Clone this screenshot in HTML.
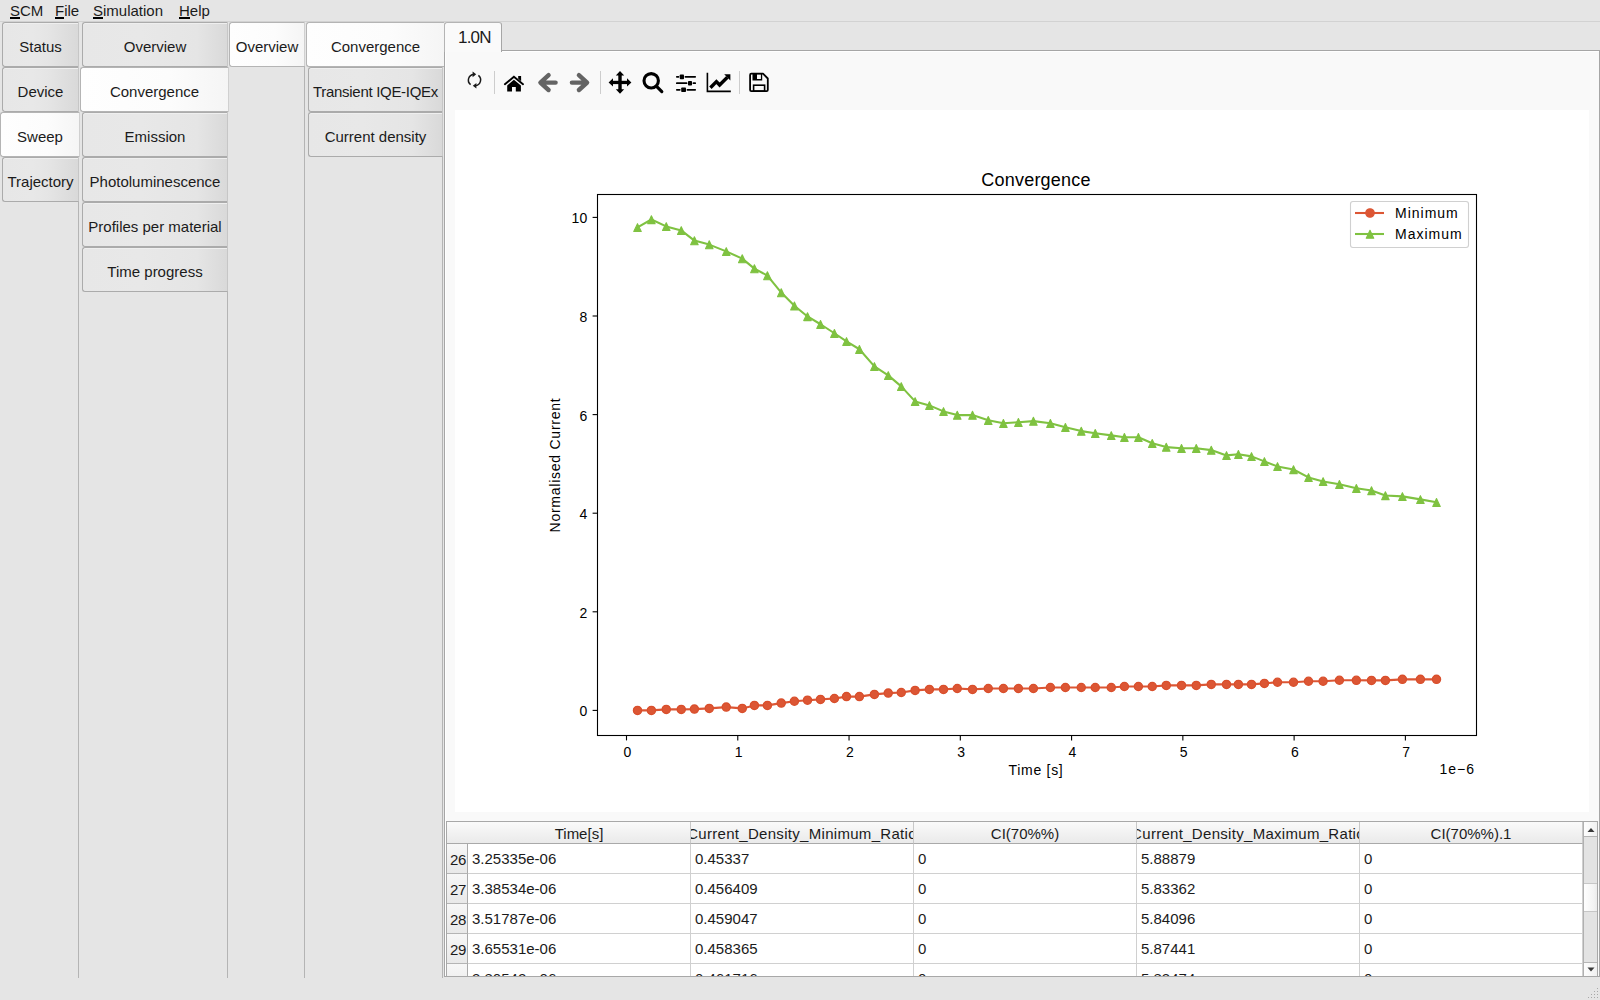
<!DOCTYPE html>
<html><head><meta charset="utf-8">
<style>
*{box-sizing:border-box;margin:0;padding:0}
html,body{width:1600px;height:1000px;overflow:hidden;background:#e5e5e5;font-family:"Liberation Sans",sans-serif;font-size:15px;color:#1b1b1b}
.a{position:absolute}
.menu{left:0;top:0;width:1600px;height:22px;background:#e5e5e5;border-bottom:1px solid #d2d2d2}
.menu span{position:absolute;top:3px;line-height:16px}
.menu u{text-decoration:none;position:relative}
.menu u::after{content:"";position:absolute;left:0;right:0;top:15.3px;height:1.7px;background:#000}
.tab{position:absolute;border:1px solid #ababab;border-right-color:#c6c6c6;border-radius:3px 0 0 3px;background:linear-gradient(to right,#e7e7e7 0%,#e8e8e8 40%,#e5e5e5 calc(100% - 30px),#d9d9d9 100%);box-shadow:inset 0 1px 0 #efefef;text-align:center;line-height:48px;white-space:nowrap;overflow:hidden}
.tab.sel{background:linear-gradient(to right,#fefefe 0%,#fcfcfc 60%,#f5f5f5 100%);border-color:#b4b4b4;border-right-color:#d0d0d0;box-shadow:none}
.vl{position:absolute;width:1px;background:#b4b4b4}
.pane{left:444px;top:50px;width:1156px;height:927px;background:#f9f9f9;border:1px solid #a6a6a6;box-shadow:inset 1px 1px 0 #fff}
.fig{left:455px;top:110px;width:1134px;height:702px;background:#fff}
.chart{position:absolute;left:0;top:0}
.tbl{left:446px;top:821px;width:1152px;height:156px;border:1px solid #a8a8a8;background:#fff;overflow:hidden}
.ht{position:absolute;left:50%;top:1px;transform:translateX(-50%)}
.hdr{position:absolute;top:0;height:22px;background:linear-gradient(#fafafa,#eaeaea);border-bottom:1px solid #a9a9a9;border-right:1px solid #c8c8c8;text-align:center;line-height:21px;white-space:nowrap;overflow:hidden;font-size:15px}
.cell{position:absolute;height:30px;border-bottom:1px solid #d0d0d0;border-right:1px solid #d0d0d0;padding-left:4px;line-height:30px;white-space:nowrap;overflow:hidden}
.rh{position:absolute;left:0;width:21px;height:30px;background:linear-gradient(#f7f7f7,#e8e8e8);border-bottom:1px solid #b4b4b4;border-right:1px solid #a9a9a9;line-height:32px;padding-left:3px;overflow:hidden;letter-spacing:-0.3px}
</style></head><body>
<div class="a menu">
<span style="left:10px"><u>S</u>CM</span>
<span style="left:55px"><u>F</u>ile</span>
<span style="left:93px"><u>S</u>imulation</span>
<span style="left:179px"><u>H</u>elp</span>
</div>

<!-- column 1 -->
<div class="tab" style="left:2px;top:22px;width:77px;height:45px">Status</div>
<div class="tab" style="left:2px;top:67px;width:77px;height:45px">Device</div>
<div class="tab sel" style="left:0px;top:112px;width:80px;height:45px">Sweep</div>
<div class="tab" style="left:2px;top:157px;width:77px;height:45px">Trajectory</div>
<div class="vl" style="left:78px;top:201px;height:777px"></div>

<!-- column 2 -->
<div class="tab" style="left:82px;top:22px;width:146px;height:45px">Overview</div>
<div class="tab sel" style="left:80px;top:67px;width:149px;height:45px">Convergence</div>
<div class="tab" style="left:82px;top:112px;width:146px;height:45px">Emission</div>
<div class="tab" style="left:82px;top:157px;width:146px;height:45px">Photoluminescence</div>
<div class="tab" style="left:82px;top:202px;width:146px;height:45px">Profiles per material</div>
<div class="tab" style="left:82px;top:247px;width:146px;height:45px">Time progress</div>
<div class="vl" style="left:227px;top:291px;height:687px"></div>

<!-- column 3 -->
<div class="tab sel" style="left:229px;top:22px;width:76px;height:45px">Overview</div>
<div class="vl" style="left:304px;top:66px;height:912px"></div>

<!-- column 4 -->
<div class="tab sel" style="left:306px;top:22px;width:138px;height:45px;border-radius:3px 0 0 3px;border-right:none">Convergence</div>
<div class="tab" style="left:308px;top:67px;width:135px;height:45px;letter-spacing:-0.3px">Transient IQE-IQEx</div>
<div class="tab" style="left:308px;top:112px;width:135px;height:45px">Current density</div>
<div class="vl" style="left:442px;top:156px;height:822px"></div>

<!-- main tab bar -->
<div class="a" style="left:445px;top:22px;width:1155px;height:29px;background:#e5e5e5;border-bottom:1px solid #a6a6a6"></div>
<div class="a pane"></div>
<div class="tab sel a" style="left:444px;top:22px;width:58px;height:30px;line-height:29px;border-bottom:none;border-radius:3px 3px 0 0;background:#fafafa;border-right-color:#a6a6a6;text-align:left;padding-left:13px;font-size:17px;line-height:30px;letter-spacing:-0.8px">1.0N</div>

<!-- toolbar -->
<div class="a" style="left:455px;top:60px;width:400px;height:45px">
<svg class="chart" width="1600" height="1000" viewBox="0 0 1600 1000" style="position:absolute;left:-455px;top:-60px">
<g fill="none" stroke="#1a1a1a" stroke-width="1.5">
<path d="M470.6 84.6A5.7 5.7 0 0 1 473.8 74.4"/>
<path d="M478.4 75.4A5.7 5.7 0 0 1 475.2 85.6"/>
</g>
<path d="M476.2 74.3L472.6 71.6L472.6 77.2Z M472.8 85.7L476.4 83L476.4 88.4Z" fill="#1a1a1a"/>
<g stroke="#cdcdcd" stroke-width="1"><line x1="494.5" y1="71" x2="494.5" y2="94"/><line x1="600.5" y1="71" x2="600.5" y2="94"/><line x1="739.5" y1="71" x2="739.5" y2="94"/></g>
<path d="M504.9 84.2L513.9 76.8L523 84.2" fill="none" stroke="#000" stroke-width="1.9" stroke-linecap="round"/>
<path d="M518.2 75.9H521.1V81.2L518.2 78.8Z" fill="#000"/>
<path d="M507.2 85.4L513.9 79.7L520.9 85.4V91.6H515.8V86.9H512V91.6H507.2Z" fill="#000"/>
<g fill="none" stroke="#646464" stroke-width="4.4" stroke-linecap="round" stroke-linejoin="round">
<path d="M548.6 75.2L540.4 82.6L548.6 90M541 82.6H555.6"/>
<path d="M578.9 75.2L587.1 82.6L578.9 90M586.5 82.6H571.9"/>
</g>
<path d="M618.3 75.6V89.2M621.7 75.6V89.2" stroke="none"/>
<rect x="618.3" y="75" width="3.4" height="15" fill="#000"/>
<rect x="612" y="80.8" width="16" height="3.3" fill="#000"/>
<path d="M620 71L624.2 75.6H615.8Z M620 93.8L624.2 89.2H615.8Z M608.6 82.4L613 78.2V86.6Z M631.4 82.4L627 78.2V86.6Z" fill="#000"/>
<circle cx="651.2" cy="80.8" r="7.2" fill="none" stroke="#000" stroke-width="3.1"/>
<path d="M656.6 86.4L661.8 91.6" stroke="#000" stroke-width="3.2" stroke-linecap="round"/>
<g stroke="#000" stroke-width="1.7" stroke-linecap="round"><path d="M676.8 76.8H678.6M685.4 76.8H695.2M676.8 83.2H686.6M693.4 83.2H695.2M676.8 89.8H679.8M687.4 89.8H695.2"/></g>
<g fill="#000"><rect x="679.8" y="74.4" width="4.2" height="4.8" rx="0.8"/><rect x="688" y="81" width="4" height="4.6" rx="0.8"/><rect x="681.2" y="87.4" width="4.8" height="4.6" rx="0.8"/></g>
<path d="M707.4 72.8V91.4H730.8" fill="none" stroke="#000" stroke-width="1.6"/>
<path d="M710.4 87.8L716.4 81.6L719.6 85L727.4 77.2" fill="none" stroke="#000" stroke-width="3.4"/>
<path d="M724.2 74.2H730.4V80.4Z" fill="#000"/>
<path d="M750.1 74.9Q750.1 73.7 751.3 73.7H763L767.8 78.5V90Q767.8 91.2 766.6 91.2H751.3Q750.1 91.2 750.1 90Z" fill="none" stroke="#000" stroke-width="1.8" stroke-linejoin="round"/>
<path d="M752.5 73.3H762.2V80.6H752.5Z M757 74.3V79.1H760.9V74.3Z" fill="#000" fill-rule="evenodd"/>
<rect x="753.6" y="85.2" width="11" height="6" fill="none" stroke="#000" stroke-width="1.6"/>
</svg>
</div>

<div class="a fig"></div>
<svg class="chart" width="1600" height="1000" viewBox="0 0 1600 1000">
<rect x="597.5" y="194.5" width="879" height="541" fill="none" stroke="#000" stroke-width="1.1"/>
<g stroke="#000" stroke-width="1.1"><line x1="626.50" y1="735.5" x2="626.50" y2="740.4"/><line x1="737.77" y1="735.5" x2="737.77" y2="740.4"/><line x1="849.04" y1="735.5" x2="849.04" y2="740.4"/><line x1="960.31" y1="735.5" x2="960.31" y2="740.4"/><line x1="1071.58" y1="735.5" x2="1071.58" y2="740.4"/><line x1="1182.85" y1="735.5" x2="1182.85" y2="740.4"/><line x1="1294.12" y1="735.5" x2="1294.12" y2="740.4"/><line x1="1405.39" y1="735.5" x2="1405.39" y2="740.4"/><line x1="597.5" y1="710.40" x2="592.6" y2="710.40"/><line x1="597.5" y1="611.80" x2="592.6" y2="611.80"/><line x1="597.5" y1="513.20" x2="592.6" y2="513.20"/><line x1="597.5" y1="414.60" x2="592.6" y2="414.60"/><line x1="597.5" y1="316.00" x2="592.6" y2="316.00"/><line x1="597.5" y1="217.40" x2="592.6" y2="217.40"/></g>
<g font-family="Liberation Sans, sans-serif" font-size="14" fill="#000"><text x="627.30" y="756.5" text-anchor="middle">0</text><text x="738.57" y="756.5" text-anchor="middle">1</text><text x="849.84" y="756.5" text-anchor="middle">2</text><text x="961.11" y="756.5" text-anchor="middle">3</text><text x="1072.38" y="756.5" text-anchor="middle">4</text><text x="1183.65" y="756.5" text-anchor="middle">5</text><text x="1294.92" y="756.5" text-anchor="middle">6</text><text x="1406.19" y="756.5" text-anchor="middle">7</text><text x="587.2" y="716.40" text-anchor="end">0</text><text x="587.2" y="617.80" text-anchor="end">2</text><text x="587.2" y="519.20" text-anchor="end">4</text><text x="587.2" y="420.60" text-anchor="end">6</text><text x="587.2" y="322.00" text-anchor="end">8</text><text x="587.2" y="223.40" text-anchor="end">10</text>
<text x="1475" y="774" text-anchor="end" letter-spacing="1">1e&#8722;6</text>
<text x="1036" y="775" text-anchor="middle" letter-spacing="0.7">Time [s]</text>
<text transform="translate(560 465) rotate(-90)" text-anchor="middle" letter-spacing="0.75">Normalised Current</text>
<text x="1036" y="186" text-anchor="middle" font-size="18" letter-spacing="0.2">Convergence</text>
</g>
<path d="M637.50 710.40 L651.40 710.40 L666.25 709.40 L681.25 709.40 L694.40 709.10 L709.25 708.40 L726.25 707.10 L742.25 708.40 L754.40 705.40 L767.40 705.40 L781.25 703.10 L794.40 701.25 L807.50 700.20 L820.50 699.40 L834.40 698.50 L846.50 696.60 L859.40 696.60 L874.40 694.40 L888.25 693.10 L901.25 692.50 L915.10 690.40 L929.40 689.40 L943.50 689.40 L957.25 688.50 L972.50 689.40 L988.25 688.50 L1003.40 688.50 L1018.40 688.50 L1033.40 688.50 L1050.40 687.50 L1065.40 687.50 L1081.25 687.50 L1095.25 687.50 L1111.25 687.50 L1124.40 686.50 L1138.40 686.50 L1152.25 686.50 L1166.25 685.40 L1181.50 685.40 L1196.25 685.40 L1211.25 684.40 L1226.50 684.40 L1238.40 684.40 L1251.50 684.40 L1264.40 683.40 L1277.50 682.25 L1293.50 682.25 L1308.50 681.25 L1323.10 681.25 L1339.40 680.25 L1356.35 680.30 L1371.50 680.40 L1385.40 680.40 L1402.40 679.35 L1420.40 679.35 L1436.50 679.35" fill="none" stroke="#dc5634" stroke-width="2.08" stroke-linejoin="round"/>
<g fill="#dc5634" stroke="#d94f2c" stroke-width="1.3"><circle cx="637.50" cy="710.40" r="4.1"/><circle cx="651.40" cy="710.40" r="4.1"/><circle cx="666.25" cy="709.40" r="4.1"/><circle cx="681.25" cy="709.40" r="4.1"/><circle cx="694.40" cy="709.10" r="4.1"/><circle cx="709.25" cy="708.40" r="4.1"/><circle cx="726.25" cy="707.10" r="4.1"/><circle cx="742.25" cy="708.40" r="4.1"/><circle cx="754.40" cy="705.40" r="4.1"/><circle cx="767.40" cy="705.40" r="4.1"/><circle cx="781.25" cy="703.10" r="4.1"/><circle cx="794.40" cy="701.25" r="4.1"/><circle cx="807.50" cy="700.20" r="4.1"/><circle cx="820.50" cy="699.40" r="4.1"/><circle cx="834.40" cy="698.50" r="4.1"/><circle cx="846.50" cy="696.60" r="4.1"/><circle cx="859.40" cy="696.60" r="4.1"/><circle cx="874.40" cy="694.40" r="4.1"/><circle cx="888.25" cy="693.10" r="4.1"/><circle cx="901.25" cy="692.50" r="4.1"/><circle cx="915.10" cy="690.40" r="4.1"/><circle cx="929.40" cy="689.40" r="4.1"/><circle cx="943.50" cy="689.40" r="4.1"/><circle cx="957.25" cy="688.50" r="4.1"/><circle cx="972.50" cy="689.40" r="4.1"/><circle cx="988.25" cy="688.50" r="4.1"/><circle cx="1003.40" cy="688.50" r="4.1"/><circle cx="1018.40" cy="688.50" r="4.1"/><circle cx="1033.40" cy="688.50" r="4.1"/><circle cx="1050.40" cy="687.50" r="4.1"/><circle cx="1065.40" cy="687.50" r="4.1"/><circle cx="1081.25" cy="687.50" r="4.1"/><circle cx="1095.25" cy="687.50" r="4.1"/><circle cx="1111.25" cy="687.50" r="4.1"/><circle cx="1124.40" cy="686.50" r="4.1"/><circle cx="1138.40" cy="686.50" r="4.1"/><circle cx="1152.25" cy="686.50" r="4.1"/><circle cx="1166.25" cy="685.40" r="4.1"/><circle cx="1181.50" cy="685.40" r="4.1"/><circle cx="1196.25" cy="685.40" r="4.1"/><circle cx="1211.25" cy="684.40" r="4.1"/><circle cx="1226.50" cy="684.40" r="4.1"/><circle cx="1238.40" cy="684.40" r="4.1"/><circle cx="1251.50" cy="684.40" r="4.1"/><circle cx="1264.40" cy="683.40" r="4.1"/><circle cx="1277.50" cy="682.25" r="4.1"/><circle cx="1293.50" cy="682.25" r="4.1"/><circle cx="1308.50" cy="681.25" r="4.1"/><circle cx="1323.10" cy="681.25" r="4.1"/><circle cx="1339.40" cy="680.25" r="4.1"/><circle cx="1356.35" cy="680.30" r="4.1"/><circle cx="1371.50" cy="680.40" r="4.1"/><circle cx="1385.40" cy="680.40" r="4.1"/><circle cx="1402.40" cy="679.35" r="4.1"/><circle cx="1420.40" cy="679.35" r="4.1"/><circle cx="1436.50" cy="679.35" r="4.1"/></g>
<path d="M637.50 227.40 L651.40 219.50 L666.25 226.40 L681.25 230.40 L694.40 240.60 L709.25 244.60 L726.25 251.40 L742.25 258.60 L754.40 268.60 L767.40 275.60 L781.25 292.60 L794.40 305.75 L807.50 316.45 L820.50 324.25 L834.40 333.25 L846.50 341.40 L859.40 349.25 L874.40 366.40 L888.25 375.40 L901.25 386.40 L915.10 401.40 L929.40 405.40 L943.50 411.40 L957.25 415.10 L972.50 415.10 L988.25 420.25 L1003.40 423.25 L1018.40 422.25 L1033.40 421.10 L1050.40 423.25 L1065.40 427.25 L1081.25 431.10 L1095.25 433.25 L1111.25 435.40 L1124.40 437.25 L1138.40 437.25 L1152.25 443.25 L1166.25 447.10 L1181.50 448.25 L1196.25 448.25 L1211.25 450.10 L1226.50 455.40 L1238.40 454.25 L1251.50 456.40 L1264.40 461.40 L1277.50 466.40 L1293.50 469.50 L1308.50 477.40 L1323.10 481.40 L1339.40 484.25 L1356.35 488.30 L1371.50 490.50 L1385.40 495.50 L1402.40 496.40 L1420.40 499.40 L1436.50 502.30" fill="none" stroke="#7fc241" stroke-width="2.08" stroke-linejoin="round"/>
<path d="M637.50 223.65L633.75 231.55L641.25 231.55ZM651.40 215.75L647.65 223.65L655.15 223.65ZM666.25 222.65L662.50 230.55L670.00 230.55ZM681.25 226.65L677.50 234.55L685.00 234.55ZM694.40 236.85L690.65 244.75L698.15 244.75ZM709.25 240.85L705.50 248.75L713.00 248.75ZM726.25 247.65L722.50 255.55L730.00 255.55ZM742.25 254.85L738.50 262.75L746.00 262.75ZM754.40 264.85L750.65 272.75L758.15 272.75ZM767.40 271.85L763.65 279.75L771.15 279.75ZM781.25 288.85L777.50 296.75L785.00 296.75ZM794.40 302.00L790.65 309.90L798.15 309.90ZM807.50 312.70L803.75 320.60L811.25 320.60ZM820.50 320.50L816.75 328.40L824.25 328.40ZM834.40 329.50L830.65 337.40L838.15 337.40ZM846.50 337.65L842.75 345.55L850.25 345.55ZM859.40 345.50L855.65 353.40L863.15 353.40ZM874.40 362.65L870.65 370.55L878.15 370.55ZM888.25 371.65L884.50 379.55L892.00 379.55ZM901.25 382.65L897.50 390.55L905.00 390.55ZM915.10 397.65L911.35 405.55L918.85 405.55ZM929.40 401.65L925.65 409.55L933.15 409.55ZM943.50 407.65L939.75 415.55L947.25 415.55ZM957.25 411.35L953.50 419.25L961.00 419.25ZM972.50 411.35L968.75 419.25L976.25 419.25ZM988.25 416.50L984.50 424.40L992.00 424.40ZM1003.40 419.50L999.65 427.40L1007.15 427.40ZM1018.40 418.50L1014.65 426.40L1022.15 426.40ZM1033.40 417.35L1029.65 425.25L1037.15 425.25ZM1050.40 419.50L1046.65 427.40L1054.15 427.40ZM1065.40 423.50L1061.65 431.40L1069.15 431.40ZM1081.25 427.35L1077.50 435.25L1085.00 435.25ZM1095.25 429.50L1091.50 437.40L1099.00 437.40ZM1111.25 431.65L1107.50 439.55L1115.00 439.55ZM1124.40 433.50L1120.65 441.40L1128.15 441.40ZM1138.40 433.50L1134.65 441.40L1142.15 441.40ZM1152.25 439.50L1148.50 447.40L1156.00 447.40ZM1166.25 443.35L1162.50 451.25L1170.00 451.25ZM1181.50 444.50L1177.75 452.40L1185.25 452.40ZM1196.25 444.50L1192.50 452.40L1200.00 452.40ZM1211.25 446.35L1207.50 454.25L1215.00 454.25ZM1226.50 451.65L1222.75 459.55L1230.25 459.55ZM1238.40 450.50L1234.65 458.40L1242.15 458.40ZM1251.50 452.65L1247.75 460.55L1255.25 460.55ZM1264.40 457.65L1260.65 465.55L1268.15 465.55ZM1277.50 462.65L1273.75 470.55L1281.25 470.55ZM1293.50 465.75L1289.75 473.65L1297.25 473.65ZM1308.50 473.65L1304.75 481.55L1312.25 481.55ZM1323.10 477.65L1319.35 485.55L1326.85 485.55ZM1339.40 480.50L1335.65 488.40L1343.15 488.40ZM1356.35 484.55L1352.60 492.45L1360.10 492.45ZM1371.50 486.75L1367.75 494.65L1375.25 494.65ZM1385.40 491.75L1381.65 499.65L1389.15 499.65ZM1402.40 492.65L1398.65 500.55L1406.15 500.55ZM1420.40 495.65L1416.65 503.55L1424.15 503.55ZM1436.50 498.55L1432.75 506.45L1440.25 506.45Z" fill="#7fc241" stroke="#7fc241" stroke-width="1.1" stroke-linejoin="round"/>
<rect x="1350.5" y="201.5" width="118" height="46" rx="2.5" fill="#fff" fill-opacity="0.8" stroke="#d0d0d0" stroke-width="1.1"/>
<line x1="1355" y1="213" x2="1384" y2="213" stroke="#dc5634" stroke-width="2.08"/>
<circle cx="1370" cy="213" r="4.17" fill="#dc5634" stroke="#dc5634" stroke-width="1.39"/>
<line x1="1355" y1="234" x2="1384" y2="234" stroke="#7fc241" stroke-width="2.08"/>
<path d="M1370.00 230.25L1366.25 238.15L1373.75 238.15Z" fill="#7fc241" stroke="#7fc241" stroke-width="1.1" stroke-linejoin="round"/>
<g font-family="Liberation Sans, sans-serif" font-size="14" fill="#000">
<text x="1395" y="218" letter-spacing="1">Minimum</text>
<text x="1395" y="239" letter-spacing="1">Maximum</text>
</g>
</svg>

<!-- table -->
<div class="a tbl">
<div class="hdr" style="left:0;width:21px;border-right:none"></div>
<div class="hdr" style="left:21px;width:223px"><span class="ht" style="white-space:nowrap">Time[s]</span></div>
<div class="hdr" style="left:244px;width:223px"><span class="ht" style="white-space:nowrap;letter-spacing:0.3px">Current_Density_Minimum_Ratio</span></div>
<div class="hdr" style="left:467px;width:223px"><span class="ht" style="white-space:nowrap">CI(70%%)</span></div>
<div class="hdr" style="left:690px;width:223px"><span class="ht" style="white-space:nowrap;letter-spacing:0.3px">Current_Density_Maximum_Ratio</span></div>
<div class="hdr" style="left:913px;width:223px"><span class="ht" style="white-space:nowrap">CI(70%%).1</span></div>
<div class="rh" style="top:22px">26</div>
<div class="cell" style="left:21px;top:22px;width:223px">3.25335e-06</div>
<div class="cell" style="left:244px;top:22px;width:223px">0.45337</div>
<div class="cell" style="left:467px;top:22px;width:223px">0</div>
<div class="cell" style="left:690px;top:22px;width:223px">5.88879</div>
<div class="cell" style="left:913px;top:22px;width:223px">0</div>
<div class="rh" style="top:52px">27</div>
<div class="cell" style="left:21px;top:52px;width:223px">3.38534e-06</div>
<div class="cell" style="left:244px;top:52px;width:223px">0.456409</div>
<div class="cell" style="left:467px;top:52px;width:223px">0</div>
<div class="cell" style="left:690px;top:52px;width:223px">5.83362</div>
<div class="cell" style="left:913px;top:52px;width:223px">0</div>
<div class="rh" style="top:82px">28</div>
<div class="cell" style="left:21px;top:82px;width:223px">3.51787e-06</div>
<div class="cell" style="left:244px;top:82px;width:223px">0.459047</div>
<div class="cell" style="left:467px;top:82px;width:223px">0</div>
<div class="cell" style="left:690px;top:82px;width:223px">5.84096</div>
<div class="cell" style="left:913px;top:82px;width:223px">0</div>
<div class="rh" style="top:112px">29</div>
<div class="cell" style="left:21px;top:112px;width:223px">3.65531e-06</div>
<div class="cell" style="left:244px;top:112px;width:223px">0.458365</div>
<div class="cell" style="left:467px;top:112px;width:223px">0</div>
<div class="cell" style="left:690px;top:112px;width:223px">5.87441</div>
<div class="cell" style="left:913px;top:112px;width:223px">0</div>
<div class="rh" style="top:142px"></div>
<div class="cell" style="left:21px;top:142px;width:223px">3.80542e-06</div>
<div class="cell" style="left:244px;top:142px;width:223px">0.461716</div>
<div class="cell" style="left:467px;top:142px;width:223px">0</div>
<div class="cell" style="left:690px;top:142px;width:223px">5.83474</div>
<div class="cell" style="left:913px;top:142px;width:223px">0</div>
<div style="position:absolute;left:1136px;top:0;width:15px;height:154px;background:#e3e3e3;border-left:1px solid #b0b0b0"></div>
<div style="position:absolute;left:1137px;top:0;width:14px;height:15px;background:linear-gradient(to right,#fdfdfd,#f0f0f0);border-bottom:1px solid #b5b5b5"></div>
<div style="position:absolute;left:1137px;top:140px;width:14px;height:15px;background:linear-gradient(to right,#fdfdfd,#f0f0f0);border-top:1px solid #b5b5b5"></div>
<div style="position:absolute;left:1137px;top:61px;width:14px;height:29px;background:linear-gradient(to right,#fefefe,#f3f3f3 70%,#e9e9e9);border-top:1px solid #c6c6c6;border-bottom:1px solid #c6c6c6"></div>
<svg style="position:absolute;left:1137px;top:0" width="14" height="156"><path d="M3.5 10L7 6L10.5 10Z M3.5 145.5L7 149.5L10.5 145.5Z" fill="#3a3a3a"/></svg>
</div>
<div class="a" style="left:1597px;top:988px;width:1.4px;height:1.4px;background:#a8a8a8"></div><div class="a" style="left:1594px;top:991px;width:1.4px;height:1.4px;background:#a8a8a8"></div><div class="a" style="left:1597px;top:991px;width:1.4px;height:1.4px;background:#a8a8a8"></div><div class="a" style="left:1591px;top:994px;width:1.4px;height:1.4px;background:#a8a8a8"></div><div class="a" style="left:1594px;top:994px;width:1.4px;height:1.4px;background:#a8a8a8"></div><div class="a" style="left:1597px;top:994px;width:1.4px;height:1.4px;background:#a8a8a8"></div><div class="a" style="left:1588px;top:997px;width:1.4px;height:1.4px;background:#a8a8a8"></div><div class="a" style="left:1591px;top:997px;width:1.4px;height:1.4px;background:#a8a8a8"></div><div class="a" style="left:1594px;top:997px;width:1.4px;height:1.4px;background:#a8a8a8"></div><div class="a" style="left:1597px;top:997px;width:1.4px;height:1.4px;background:#a8a8a8"></div>
</body></html>
